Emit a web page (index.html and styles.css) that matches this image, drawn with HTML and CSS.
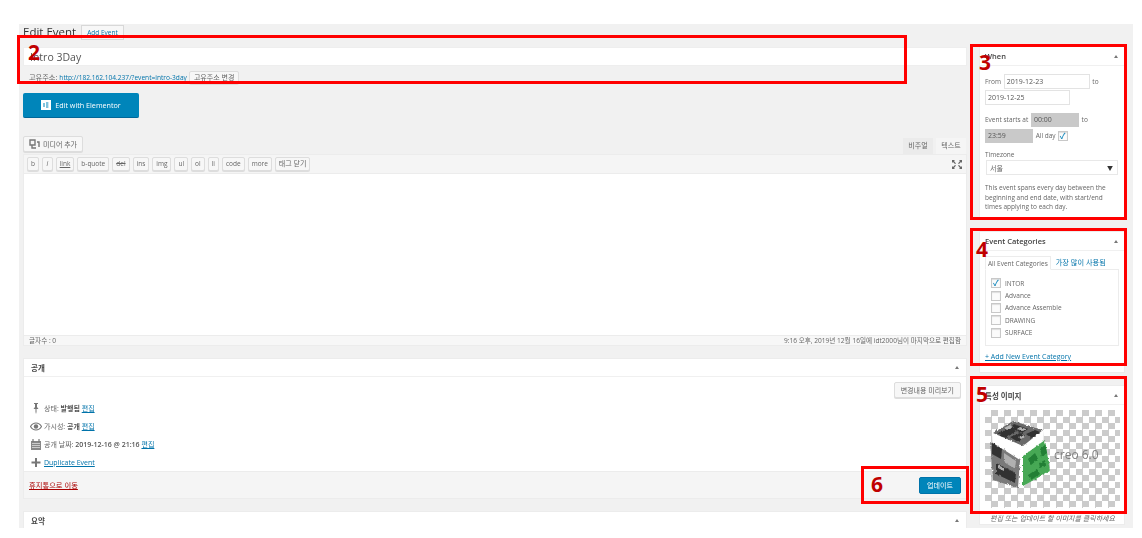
FILE: index.html
```html
<!DOCTYPE html>
<html lang="ko">
<head>
  <meta charset="UTF-8">
  <title>Edit Event</title>
  <link rel="stylesheet" href="styles.css">
</head>
<body>
<div class="screen">
  <div class="columns">
    <div class="main">
      <div class="page-head">
        <h1>Edit Event</h1>
        <a class="add-new">Add Event</a>
      </div>
      <input class="title-input" type="text" value="Intro 3Day">
      <div class="permalink">
        <span class="perma-label">고유주소:</span> <a class="link">http://182.162.104.237/?event=intro-3day</a>
        <button class="btn">고유주소 변경</button>
      </div>
      <a class="elementor-btn">
        <span class="el-icon"><svg width="10" height="10" viewBox="0 0 10 10"><rect width="10" height="10" fill="#fff"/><path d="M3 3v4M5 3h2.400M5 5h2.400M5 7h2.400" stroke="#0085ba" fill="none"/></svg></span>
        Edit with Elementor
      </a>
      <div class="media-row">
        <button class="btn media-btn">
          <svg width="11" height="10" viewBox="0 0 11 10"><path d="M1 1h5v5H1zM3 6v3h4M8 3h2v5" fill="none" stroke="#777" stroke-width="1.400"/></svg>
          미디어 추가
        </button>
        <div class="tabs">
          <span class="tab tab-off">비주얼</span>
          <span class="tab">텍스트</span>
        </div>
      </div>
      <div class="toolbar">
        <button class="qt">b</button>
        <button class="qt qt-i">i</button>
        <button class="qt qt-link">link</button>
        <button class="qt">b-quote</button>
        <button class="qt qt-del">del</button>
        <button class="qt">ins</button>
        <button class="qt">img</button>
        <button class="qt">ul</button>
        <button class="qt">ol</button>
        <button class="qt">li</button>
        <button class="qt">code</button>
        <button class="qt">more</button>
        <button class="qt qt-close">태그 닫기</button>
        <svg class="fullscreen" width="10" height="9" viewBox="0 0 10 9"><path d="M0 0h3L2 1l2 2.400-1 .6L1 2 0 3zM10 0H7l1 1-2 2.400 1 .6 2-2 1 1zM0 9h3L2 8l2-2.400-1-.6-2 2-1-1zM10 9H7l1-1-2-2.400 1-.6 2 2 1-1z" fill="#666"/></svg>
      </div>
      <div class="editor"></div>
      <div class="status-bar">
        <span>글자수 : 0</span>
        <span>9:16 오후, 2019년 12월 16일에 idt2000님이 마지막으로 편집함</span>
      </div>

      <div class="box publish">
        <div class="box-head"><span>공개</span><i class="caret"></i></div>
        <div class="publish-body">
          <div class="preview-row"><button class="btn">변경내용 미리보기</button></div>
          <div class="misc">
            <svg class="misc-icon" width="12" height="11" viewBox="0 0 12 11"><path d="M4 0h4v1H7v3l1.500 2h-2v3L6 11l-.5-2V6h-2L5 4V1H4z" fill="#777"/></svg>
            <span>상태: <b>발행됨</b> <a class="link">편집</a></span>
          </div>
          <div class="misc">
            <svg class="misc-icon" width="12" height="9" viewBox="0 0 12 9"><path d="M.5 4.500C2 2 4 1 6 1s4 1 5.500 3.500C10 7 8 8 6 8S2 7 .5 4.500z" fill="none" stroke="#777" stroke-width="1.200"/><circle cx="6" cy="4.500" r="2.200" fill="#777"/></svg>
            <span>가시성: <b>공개</b> <a class="link">편집</a></span>
          </div>
          <div class="misc">
            <svg class="misc-icon" width="12" height="11" viewBox="0 0 12 11"><path d="M1 2h10v9H1z" fill="#888"/><path d="M3 0v3M9 0v3" stroke="#777" stroke-width="1.200"/><path d="M2 4.500h8M2 6.500h8M2 8.500h8" stroke="#ddd" stroke-width=".8"/></svg>
            <span>공개 날짜: <b>2019-12-16 @ 21:16</b> <a class="link">편집</a></span>
          </div>
          <div class="misc">
            <svg class="misc-icon" width="12" height="9" viewBox="0 0 12 9"><path d="M5 0h2v3.500h3.500v2H7V9H5V5.500H1.500v-2H5z" fill="#777"/></svg>
            <a class="link">Duplicate Event</a>
          </div>
        </div>
        <div class="publish-foot">
          <a class="trash">휴지통으로 이동</a>
          <button class="update-btn">업데이트</button>
        </div>
      </div>

      <div class="box">
        <div class="box-head"><span>요약</span><i class="caret"></i></div>
      </div>
    </div>

    <div class="side">
      <div class="box side-box">
        <div class="box-head"><span>When</span><i class="caret"></i></div>
        <div class="when-body">
          <div class="row">From <input class="date" value="2019-12-23"> to</div>
          <div class="row"><input class="date date-end" value="2019-12-25"></div>
          <div class="row row-time">Event starts at <input class="time" value="00:00" disabled> to</div>
          <div class="row"><input class="time time-end" value="23:59" disabled> All day<span class="check check-small">✓</span></div>
          <div class="tz-label">Timezone</div>
          <div class="tz-select"><span>서울</span><span class="tz-arrow">▼</span></div>
          <p class="note">This event spans every day between the beginning and end date, with start/end times applying to each day.</p>
        </div>
      </div>

      <div class="box side-box">
        <div class="box-head"><span>Event Categories</span><i class="caret"></i></div>
        <div class="cat-body">
          <div class="cat-tabs">
            <span class="cat-tab cat-tab-on">All Event Categories</span>
            <span class="cat-tab cat-tab-ko">가장 많이 사용됨</span>
          </div>
          <ul class="cat-list">
            <li><span class="check">✓</span>INTOR</li>
            <li><span class="check"></span>Advance</li>
            <li><span class="check"></span>Advance Assemble</li>
            <li><span class="check"></span>DRAWING</li>
            <li><span class="check"></span>SURFACE</li>
          </ul>
          <a class="link add-cat">+ Add New Event Category</a>
        </div>
      </div>

      <div class="box side-box">
        <div class="box-head"><span>특성 이미지</span><i class="caret"></i></div>
        <div class="thumb-body">
          <div class="thumb">
            <svg class="cube" width="60" height="72" viewBox="0 0 60 72">
              <defs>
                <filter id="rough" x="-10%" y="-10%" width="120%" height="120%">
                  <feTurbulence type="fractalNoise" baseFrequency="0.35" numOctaves="2" seed="4"/>
                  <feDisplacementMap in="SourceGraphic" scale="3" xChannelSelector="R" yChannelSelector="G"/>
                </filter>
              </defs>
              <path d="M2 12 23 0l31 9-2 40-20 18-28-9z" fill="#fff"/>
              <g filter="url(#rough)">
                <path d="M3 12 23 0l30 9-20 16z" fill="#6a6a6a"/>
                <path d="M8 12l12-6 6 4-10 7zM24 3l14 5-6 4-12-5zM36 13l9-4 5 2-9 6zM20 16l10-4 6 3-8 6z" fill="#333"/>
                <path d="M14 7l6-3 3 2-6 3zM30 6l6 2-3 2-6-2zM28 16l5-2 3 2-5 2z" fill="#b5b5b5"/>
                <path d="M0 20l30 19-2 28L3 59z" fill="#7a7a7a"/>
                <path d="M2 22l10 6-1 10-9-5zM6 42l20 10-1 10-19-9z" fill="#333"/>
                <path d="M14 32l12 8-1 8-11-7zM8 44l6 3v3l-6-3z" fill="#b0b0b0"/>
                <path d="M33 35 55 19l5 31-27 15z" fill="#46a855"/>
                <path d="M38 38l7-6 3 6-7 6zM50 28l5-4 2 8-5 4zM38 54l9-6 3 5-9 6zM49 42l6-3 1 5-6 3z" fill="#237f36"/>
              </g>
            </svg>
            <span class="creo">creo 6.0</span>
          </div>
          <p class="thumb-note">편집 또는 업데이트 할 이미지를 클릭하세요</p>
        </div>
      </div>
    </div>
  </div>
</div>

<div class="mark mark-2"><span>2</span></div>
<div class="mark mark-3"><span>3</span></div>
<div class="mark mark-4"><span>4</span></div>
<div class="mark mark-5"><span>5</span></div>
<div class="mark mark-6"><span>6</span></div>
</body>
</html>
```

FILE: styles.css
```css
html, body { margin: 0; padding: 0; background: #fff; }
body { width: 1142px; height: 538px; overflow: hidden; position: relative; font-family: "Open Sans", "Noto Sans CJK KR", sans-serif; font-size: 7px; color: #666; }
.screen { margin: 24px 9px 0 19px; height: 504px; background: #f1f1f1; overflow: hidden; filter: blur(0.5px); }
.columns { display: grid; grid-template-columns: 944px 146px; column-gap: 12px; padding-left: 4px; }
.main, .side { min-width: 0; }

.page-head { display: flex; align-items: center; gap: 5px; height: 16px; }
h1 { margin: 0; font-size: 11.500px; font-weight: 400; color: #333; line-height: 14px; }
.add-new { font-size: 6.500px; color: #0073aa; border: 1px solid #d8d8d8; background: #f7f7f7; padding: 2px 5px; line-height: 9px; }

.title-input { display: block; box-sizing: border-box; width: 944px; height: 19px; margin: 7px 0 0; padding: 0 6px; border: 1px solid #eee; background: #fff; font: 10.500px "Open Sans", sans-serif; color: #555; outline: none; }
.permalink { display: flex; align-items: center; gap: 2px; height: 14px; margin-top: 4px; padding-left: 6px; font-size: 6.600px; }
.perma-label { font-size: 7.200px; }
.link { color: #0073aa; text-decoration: underline; }
.btn { font-family: inherit; font-size: 7px; color: #666; background: #f7f7f7; border: 1px solid #ddd; border-radius: 2px; padding: 0 4px; height: 13px; line-height: 11px; box-shadow: 0 1px 0 #ddd; }

.elementor-btn { display: flex; align-items: center; justify-content: center; gap: 4px; width: 116px; height: 25px; margin-top: 9px; background: #0085ba; border-radius: 2px; border-bottom: 1px solid #006799; box-sizing: border-box; color: #fff; font-size: 7.200px; }
.el-icon { display: flex; }

.media-row { display: flex; justify-content: space-between; align-items: flex-end; margin-top: 18px; height: 18px; }
.media-btn { display: flex; align-items: center; gap: 3px; height: 16px; padding: 0 5px; margin-bottom: 2px; }
.tabs { display: flex; padding-right: 1px; }
.tab { padding: 0 4px; height: 16px; line-height: 16px; width: 22px; text-align: center; background: #f5f5f5; }
.tab-off { background: #ebebeb; margin-right: 3px; }

.toolbar { display: flex; align-items: center; gap: 3px; height: 20px; box-sizing: border-box; padding: 0 3px; background: #f5f5f5; border: 1px solid #ececec; }
.qt { font: 6.500px "Open Sans", "Noto Sans CJK KR", sans-serif; color: #666; height: 14px; padding: 0 3px; background: #f7f7f7; border: 1px solid #ddd; border-radius: 2px; line-height: 12px; box-shadow: 0 1px 0 #ddd; }
.qt-i { font-style: italic; padding: 0 3.500px; }
.qt-link { text-decoration: underline; }
.qt-del { text-decoration: line-through; }
.qt-close { font-size: 7px; padding: 0 3px; }
.fullscreen { margin-left: auto; margin-right: 1px; }

.editor { height: 161px; background: #fff; border-left: 1px solid #ececec; border-right: 1px solid #ececec; }
.status-bar { display: flex; justify-content: space-between; height: 9px; line-height: 9px; padding: 0 5px; background: #f7f7f7; border: 1px solid #ececec; font-size: 6.600px; }

.box { background: #fff; border: 1px solid #ececec; box-sizing: border-box; }
.box-head { display: flex; justify-content: space-between; align-items: center; height: 17px; padding: 0 7px; border-bottom: 1px solid #f0f0f0; font-size: 7.500px; font-weight: 600; color: #444; }
.caret { width: 0; height: 0; border: 2.500px solid transparent; border-bottom: 3px solid #777; border-top: 0; }
.publish { margin-top: 12px; }
.publish-body { height: 94px; box-sizing: border-box; padding: 5px 5px 0 6px; }
.preview-row { display: flex; justify-content: flex-end; height: 17px; }
.preview-row .btn { height: 16px; padding: 0 6px; }
.misc { display: flex; align-items: center; gap: 2px; height: 18px; font-size: 7px; }
.misc-icon { flex: none; }
.misc b { font-weight: 600; color: #555; }
.publish-foot { display: flex; justify-content: space-between; align-items: center; height: 26px; padding: 0 5px; background: #f5f5f5; border-top: 1px solid #ececec; }
.trash { color: #a00; text-decoration: underline; font-size: 7.300px; }
.update-btn { height: 17px; width: 42px; padding: 0; font: 7px "Open Sans", "Noto Sans CJK KR", sans-serif; color: #fff; background: #0085ba; border: 1px solid #0073aa; border-radius: 2px; }
.publish + .box { margin-top: 12px; }

.side { padding-top: 22px; font-size: 6.500px; }
.side-box { margin-bottom: 11px; }
.side-box + .side-box + .side-box { margin-top: 12px; }
.side-box .box-head { padding: 0 6px 0 5px; height: 18px; }
.when-body { padding: 8px 6px 0 5px; height: 153px; box-sizing: border-box; }
.row { display: flex; align-items: center; gap: 1px; height: 15px; margin-bottom: 1px; white-space: pre; }
.date { width: 86px; height: 15px; box-sizing: border-box; border: 1px solid #e3e3e3; padding: 0 2px; font: 7px "Open Sans", sans-serif; color: #555; }
.date-end { width: 85px; }
.row-time { margin-top: 7px; }
.time { width: 48px; height: 14px; box-sizing: border-box; border: none; background: #c9c9c9; padding: 0 3px; font: 7px "Open Sans", sans-serif; color: #555; }
.check { display: inline-flex; align-items: center; justify-content: center; width: 8px; height: 8px; border: 1px solid #c8c8c8; background: #fbfbfb; color: #1e8cbe; font-size: 8px; font-weight: 700; line-height: 8px; box-shadow: inset 0 1px 1px #ddd; margin-right: 4px; }
.check-small { margin-left: 1px; }
.tz-label { margin-top: 7px; line-height: 10px; }
.tz-select { display: flex; justify-content: space-between; align-items: center; height: 13px; padding: 0 4px 0 3px; margin-left: 1px; border: 1px solid #e8e8e8; background: #fff; font-size: 7px; }
.tz-arrow { font-size: 6px; color: #333; }
.note { margin: 8px 0 0; font-size: 6.500px; line-height: 9.500px; }

.cat-body { padding: 5px 5px 0; height: 121px; box-sizing: border-box; }
.cat-tabs { display: flex; height: 13px; align-items: stretch; }
.cat-tab { padding: 0 5px; line-height: 13px; color: #0073aa; white-space: nowrap; font-size: 6.500px; }
.cat-tab-ko { font-size: 7.200px; }
.cat-tab-on { color: #666; border: 1px solid #ececec; border-bottom: 1px solid #fff; margin-bottom: -1px; padding: 0 2px; position: relative; background: #fff; }
.cat-list { list-style: none; margin: 0; padding: 7px 5px 0; border: 1px solid #ececec; height: 77px; box-sizing: border-box; }
.cat-list li { display: flex; align-items: center; height: 12.400px; }
.add-cat { display: block; margin-top: 6px; font-size: 7px; line-height: 10px; }

.thumb-body { padding: 5px 4px 0 5px; }
.thumb { height: 98px; display: flex; align-items: center; background-color: #fff; background-image: repeating-conic-gradient(#cbcbcb 0 25%, #fff 0 50%); background-size: 13px 13px; }
.cube { margin: 0 0 5px 5px; flex: none; }
.creo { margin: 0 0 10px 4px; font-size: 12px; color: #808080; }
.thumb-note { margin: 6px 0 0; font-size: 7px; line-height: 10px; font-style: italic; text-align: center; white-space: nowrap; }

.mark { position: absolute; border: 3px solid #f00; box-sizing: border-box; color: #c00000; font: 700 21px "Open Sans", sans-serif; line-height: 24px; }
.mark span { position: absolute; }
.mark-2 { left: 17px; top: 35px; width: 890px; height: 49px; }
.mark-2 span { left: 8px; top: 2px; }
.mark-3 { left: 970px; top: 44px; width: 157px; height: 176px; }
.mark-3 span { left: 6px; top: 3px; }
.mark-4 { left: 970px; top: 228px; width: 157px; height: 138px; }
.mark-4 span { left: 3px; top: 6px; }
.mark-5 { left: 970px; top: 376px; width: 157px; height: 138px; }
.mark-5 span { left: 3px; top: 3px; }
.mark-6 { left: 861px; top: 466px; width: 108px; height: 38px; }
.mark-6 span { left: 7px; top: 3px; }
```
